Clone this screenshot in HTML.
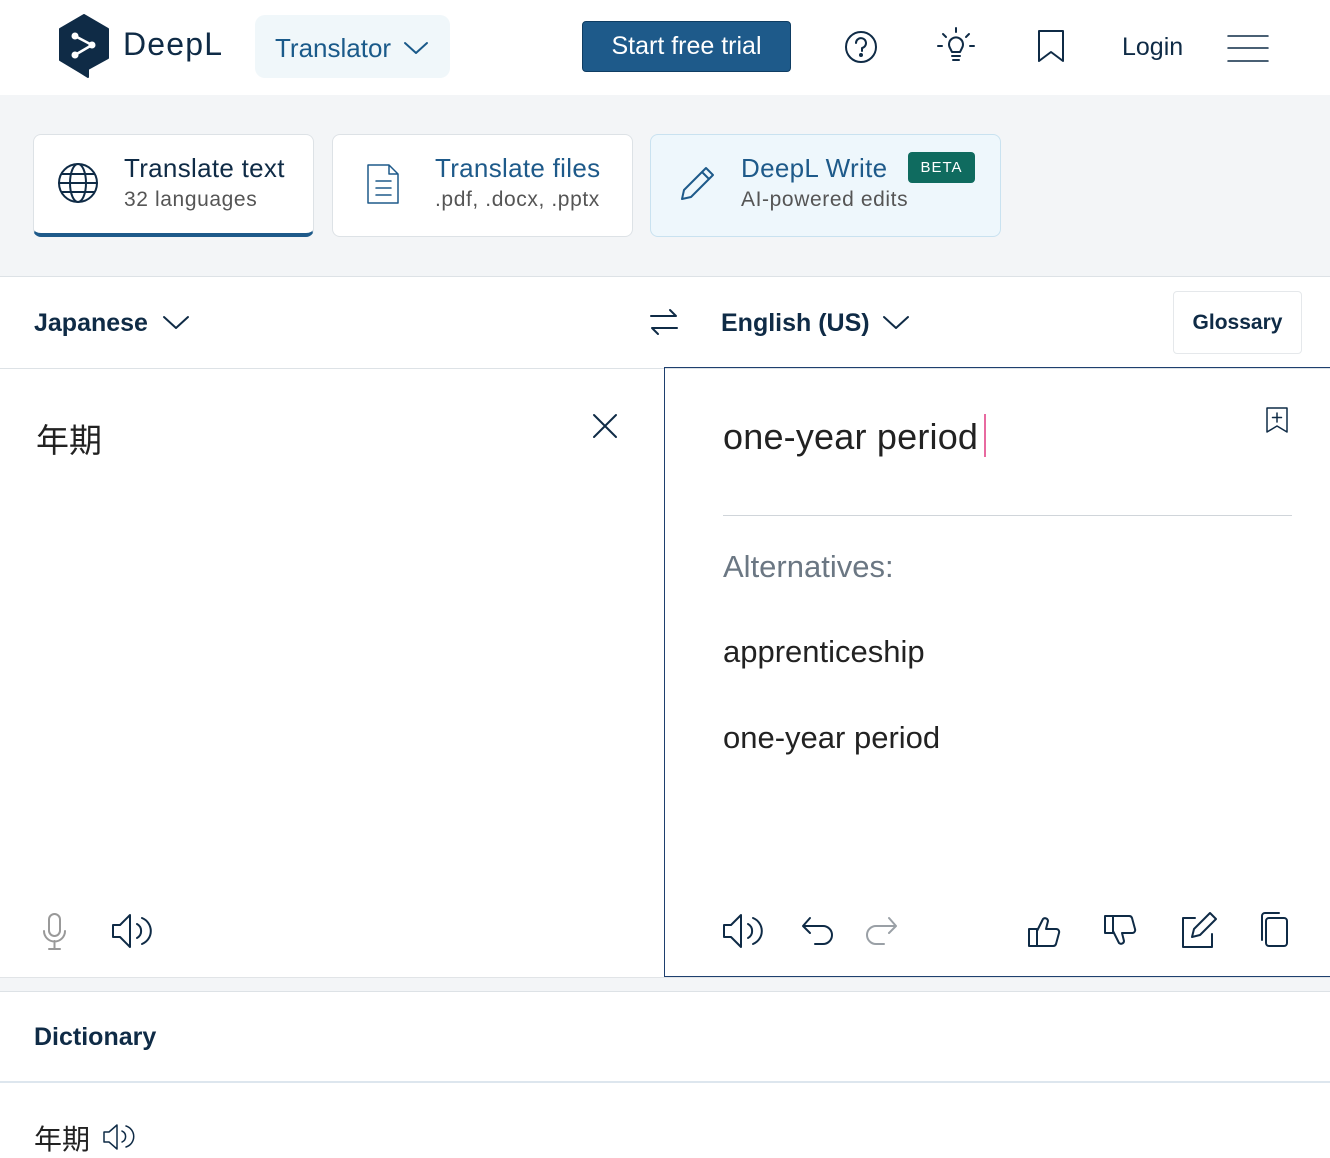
<!DOCTYPE html>
<html><head><meta charset="utf-8"><style>
*{box-sizing:border-box;margin:0;padding:0}
body{width:1330px;height:1132px;overflow:hidden;background:#fff;font-family:"Liberation Sans","Noto Sans CJK JP",sans-serif;color:#0f2b46;position:relative}
.a{position:absolute}
svg{position:absolute;fill:none;stroke:#0f2b46;stroke-width:2;stroke-linecap:round;stroke-linejoin:round}
</style></head><body>
<svg style="left:58px;top:14px" width="52" height="64" viewBox="0 0 52 64"><path d="M26 1 L50 15 L50 44 L30 55 L30 63 L22 58 L2 46 L2 15Z" fill="#0f2b46" stroke="#0f2b46"/><path d="M17 22 L34 31 L17 41" stroke="#fff" stroke-width="2.5"/><circle cx="17" cy="22" r="3.5" fill="#fff" stroke="none"/><circle cx="34" cy="31" r="3.5" fill="#fff" stroke="none"/><circle cx="17" cy="41" r="3.5" fill="#fff" stroke="none"/></svg>
<div class="a" style="left:123px;top:26px;font-size:32px;color:#0f2b46;letter-spacing:1.2px">DeepL</div>
<div class="a" style="left:255px;top:15px;width:195px;height:63px;background:#f0f7fa;border-radius:10px"></div>
<div class="a" style="left:275px;top:33px;font-size:26px;color:#1a5a8a">Translator</div>
<svg style="left:403px;top:40px" width="26" height="16"><path d="M2 3 L13 13 L24 3" stroke="#1a5a8a"/></svg>
<div class="a" style="left:582px;top:21px;width:209px;height:51px;background:#1e5a8a;border-radius:4px;border:1px solid #0f3d63;color:#fff;font-size:25px;text-align:center;line-height:49px">Start free trial</div>
<svg style="left:843px;top:29px" width="36" height="36"><circle cx="18" cy="18" r="15"/><path d="M13 14 a5 5 0 1 1 6 5 v3"/><circle cx="18" cy="26" r="1" fill="#0f2b46"/></svg>
<svg style="left:936px;top:26px" width="40" height="40"><path d="M14 22 a7 7 0 1 1 12 0 l-2 4 h-8z M16 30 h8 M17 34 h6 M20 2v4 M7 8l3 3 M33 8l-3 3 M2 20h4 M34 20h4"/></svg>
<svg style="left:1036px;top:29px" width="30" height="34"><path d="M3 2 h24 v30 l-12-9 l-12 9z"/></svg>
<div class="a" style="left:1122px;top:33px;font-size:25px;color:#0f2b46">Login</div>
<svg style="left:1226px;top:34px" width="44" height="30"><path d="M2 2h40 M2 14h40 M2 27h40" stroke-width="1.5"/></svg>
<div class="a" style="left:0;top:95px;width:1330px;height:182px;background:#f3f5f7;border-bottom:1px solid #dde2e6"></div>
<div class="a" style="left:33px;top:134px;width:281px;height:103px;background:#fff;border:1px solid #dde2e6;border-radius:8px;border-bottom:4px solid #1e5a8a"></div>
<svg style="left:57px;top:162px" width="42" height="42"><circle cx="21" cy="21" r="19"/><ellipse cx="21" cy="21" rx="8" ry="19"/><path d="M2 21h38 M5 12h32 M5 30h32"/></svg>
<div class="a" style="left:124px;top:153px;font-size:26px;color:#0f2b46;letter-spacing:0.3px">Translate text</div>
<div class="a" style="left:124px;top:188px;font-size:21px;color:#555;letter-spacing:0.6px">32 languages</div>
<div class="a" style="left:332px;top:134px;width:301px;height:103px;background:#fff;border:1px solid #dde2e6;border-radius:8px"></div>
<svg style="left:365px;top:163px" width="36" height="42"><path d="M3 2 h21 l9 9 v29 h-30z M24 2 v9 h9 M11 18 h15 M11 25 h15 M11 32 h15" stroke="#1e5a8a" stroke-width="1.5"/></svg>
<div class="a" style="left:435px;top:153px;font-size:26px;color:#1e5a8a;letter-spacing:0.3px">Translate files</div>
<div class="a" style="left:435px;top:188px;font-size:21px;color:#555;letter-spacing:0.6px">.pdf, .docx, .pptx</div>
<div class="a" style="left:650px;top:134px;width:351px;height:103px;background:#eef7fc;border:1px solid #c9e2f0;border-radius:8px"></div>
<svg style="left:677px;top:164px" width="40" height="40"><path d="M5 35 l2-9 l22-22 l7 7 l-22 22z M25 8 l7 7" stroke="#1e5a8a"/></svg>
<div class="a" style="left:741px;top:153px;font-size:26px;color:#1e5a8a;letter-spacing:0.3px">DeepL Write</div>
<div class="a" style="left:908px;top:152px;width:67px;height:31px;background:#0f6b5f;border-radius:4px;color:#fff;font-size:15px;text-align:center;line-height:31px;letter-spacing:1px">BETA</div>
<div class="a" style="left:741px;top:188px;font-size:21px;color:#555;letter-spacing:0.6px">AI-powered edits</div>
<div class="a" style="left:0;top:368px;width:1330px;height:1px;background:#dde2e6"></div>
<div class="a" style="left:34px;top:309px;font-size:25px;font-weight:bold;color:#0f2b46">Japanese</div>
<svg style="left:162px;top:314px" width="28" height="18"><path d="M2 3 L14 14 L26 3"/></svg>
<svg style="left:647px;top:305px" width="34" height="34"><path d="M4 11 h25 l-6-6 M30 23 h-25 l6 6"/></svg>
<div class="a" style="left:721px;top:309px;font-size:25px;font-weight:bold;color:#0f2b46">English (US)</div>
<svg style="left:882px;top:314px" width="28" height="18"><path d="M2 3 L14 14 L26 3"/></svg>
<div class="a" style="left:1173px;top:291px;width:129px;height:63px;border:1px solid #e5e8eb;border-radius:4px;font-size:21px;font-weight:bold;text-align:center;line-height:61px;color:#0f2b46">Glossary</div>
<div class="a" style="left:36px;top:414px;font-size:33px;color:#222">年期</div>
<svg style="left:592px;top:413px" width="26" height="26"><path d="M2 2 L24 24 M24 2 L2 24"/></svg>
<svg style="left:40px;top:912px" width="30" height="40"><rect x="9" y="2" width="11" height="22" rx="5.5" stroke="#999"/><path d="M4 19 a10 10 0 0 0 21 0 M14.5 29 v8 M9 37 h11" stroke="#999"/></svg>
<svg style="left:110px;top:912px" width="42" height="38"><path d="M3 13 h7 l10-10 v32 l-10-10 h-7z M27 12 a8 8 0 0 1 0 14 M32 6 a14 14 0 0 1 0 26"/></svg>
<div class="a" style="left:664px;top:367px;width:666px;height:610px;border:1.5px solid #1e3f6e;border-right:none"></div>
<div class="a" style="left:723px;top:416px;font-size:36px;color:#222;letter-spacing:0.2px">one-year period</div>
<div class="a" style="left:984px;top:414px;width:2px;height:43px;background:#e86aa0"></div>
<svg style="left:1265px;top:406px" width="24" height="28"><path d="M2 2h20v24l-10-6l-10 6z M12 7v9 M7.5 11.5h9" stroke-width="1.5"/></svg>
<div class="a" style="left:723px;top:515px;width:569px;height:1px;background:#d0d5da"></div>
<div class="a" style="left:723px;top:549px;font-size:31px;color:#6b7783">Alternatives:</div>
<div class="a" style="left:723px;top:634px;font-size:31px;color:#222">apprenticeship</div>
<div class="a" style="left:723px;top:720px;font-size:31px;color:#222">one-year period</div>
<svg style="left:721px;top:912px" width="42" height="38"><path d="M3 13 h7 l10-10 v32 l-10-10 h-7z M27 12 a8 8 0 0 1 0 14 M32 6 a14 14 0 0 1 0 26"/></svg>
<svg style="left:800px;top:914px" width="36" height="34"><path d="M10 4 l-7 8 l7 7 M3 12 h20 a9 9 0 0 1 0 18 h-8"/></svg>
<svg style="left:863px;top:914px" width="36" height="34"><path d="M26 4 l7 8 l-7 7 M33 12 h-20 a9 9 0 0 0 0 18 h8" stroke="#9aa0a6"/></svg>
<svg style="left:1026px;top:912px" width="38" height="38"><path d="M3 17 h8 v17 h-8z M11 19 l6-12 a3 3 0 0 1 5 2 l-2 8 h10 a3 3 0 0 1 3 4 l-3 11 a3 3 0 0 1-3 2 h-16"/></svg>
<svg style="left:1102px;top:912px" width="38" height="38"><path d="M3 21 h8 v-17 h-8z M11 19 l6 12 a3 3 0 0 0 5-2 l-2-8 h10 a3 3 0 0 0 3-4 l-3-11 a3 3 0 0 0-3-2 h-16"/></svg>
<svg style="left:1178px;top:910px" width="40" height="40"><path d="M17 8 h-12 v29 h29 v-13 M14 27 l2-8 l16-16 l6 6 l-16 16z"/></svg>
<svg style="left:1256px;top:910px" width="36" height="40"><rect x="10" y="8" width="21" height="28" rx="3"/><path d="M6 30 v-24 a3 3 0 0 1 3-3 h14"/></svg>
<div class="a" style="left:0;top:977px;width:1330px;height:15px;background:#f3f5f7;border-top:1px solid #e1e4e7;border-bottom:1px solid #dde2e6"></div>
<div class="a" style="left:34px;top:1023px;font-size:25px;font-weight:bold;color:#0f2b46">Dictionary</div>
<div class="a" style="left:0;top:1081px;width:1330px;height:2px;background:#dde6ee"></div>
<div class="a" style="left:34px;top:1118px;font-size:28px;color:#222">年期</div>
<svg style="left:101px;top:1122px" width="34" height="30"><path d="M3 10 h5 l8-7 v24 l-8-7 h-5z M21 9 a6 6 0 0 1 0 11 M25 4 a11 11 0 0 1 0 21" stroke-width="1.5"/></svg>
</body></html>
